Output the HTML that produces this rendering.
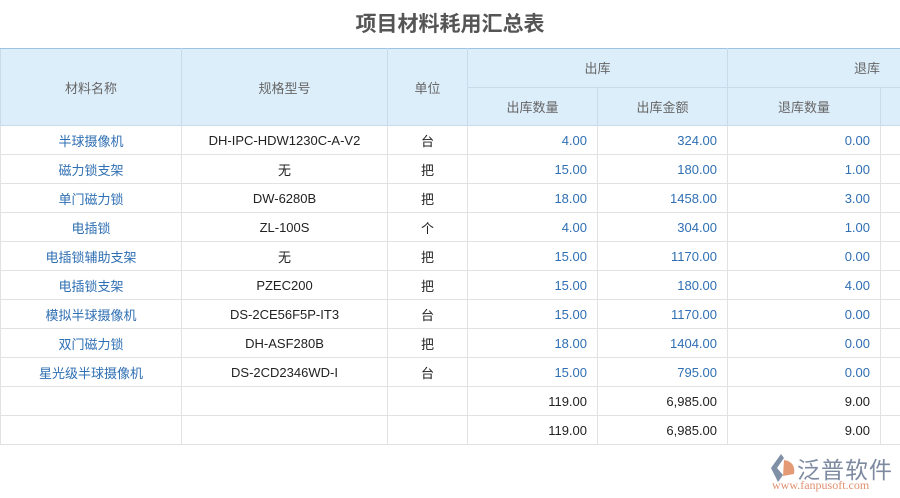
<!DOCTYPE html><html><head><meta charset="utf-8"><style>
body{margin:0;width:900px;height:498px;background:#fff;font-family:"Liberation Sans","Noto Sans CJK SC",sans-serif;overflow:hidden;position:relative}
h1{margin:0;position:absolute;top:8px;left:0;width:900px;text-align:center;font-size:21px;color:#555;font-weight:bold;letter-spacing:0px}
table{position:absolute;top:48px;left:0;border-collapse:collapse;table-layout:fixed;width:920px;font-size:13px}
td,th{border:1px solid #e2e2e2;height:28px;padding:0 10px;white-space:nowrap;overflow:hidden}
th{background:#ddeefb;color:#666;font-weight:normal;border-color:#c9dbea}
thead tr:first-child th{border-top:1px solid #9cc3e2}
.c{text-align:center}.r{text-align:right}
.b{color:#2f6fb3}
td{color:#222}
</style></head><body>
<h1>项目材料耗用汇总表</h1>
<table>
<colgroup><col style="width:181px"><col style="width:206px"><col style="width:80px"><col style="width:130px"><col style="width:130px"><col style="width:153px"><col style="width:40px"></colgroup>
<thead>
<tr><th rowspan="2" style="height:76px">材料名称</th><th rowspan="2">规格型号</th><th rowspan="2">单位</th><th colspan="2" style="height:37px">出库</th><th colspan="2" style="text-align:left;padding-left:126px">退库</th></tr>
<tr><th style="height:37px">出库数量</th><th>出库金额</th><th>退库数量</th><th></th></tr>
</thead>
<tbody>
<tr><td class="c b">半球摄像机</td><td class="c">DH-IPC-HDW1230C-A-V2</td><td class="c">台</td><td class="r b">4.00</td><td class="r b">324.00</td><td class="r b">0.00</td><td></td></tr>
<tr><td class="c b">磁力锁支架</td><td class="c">无</td><td class="c">把</td><td class="r b">15.00</td><td class="r b">180.00</td><td class="r b">1.00</td><td></td></tr>
<tr><td class="c b">单门磁力锁</td><td class="c">DW-6280B</td><td class="c">把</td><td class="r b">18.00</td><td class="r b">1458.00</td><td class="r b">3.00</td><td></td></tr>
<tr><td class="c b">电插锁</td><td class="c">ZL-100S</td><td class="c">个</td><td class="r b">4.00</td><td class="r b">304.00</td><td class="r b">1.00</td><td></td></tr>
<tr><td class="c b">电插锁辅助支架</td><td class="c">无</td><td class="c">把</td><td class="r b">15.00</td><td class="r b">1170.00</td><td class="r b">0.00</td><td></td></tr>
<tr><td class="c b">电插锁支架</td><td class="c">PZEC200</td><td class="c">把</td><td class="r b">15.00</td><td class="r b">180.00</td><td class="r b">4.00</td><td></td></tr>
<tr><td class="c b">模拟半球摄像机</td><td class="c">DS-2CE56F5P-IT3</td><td class="c">台</td><td class="r b">15.00</td><td class="r b">1170.00</td><td class="r b">0.00</td><td></td></tr>
<tr><td class="c b">双门磁力锁</td><td class="c">DH-ASF280B</td><td class="c">把</td><td class="r b">18.00</td><td class="r b">1404.00</td><td class="r b">0.00</td><td></td></tr>
<tr><td class="c b">星光级半球摄像机</td><td class="c">DS-2CD2346WD-I</td><td class="c">台</td><td class="r b">15.00</td><td class="r b">795.00</td><td class="r b">0.00</td><td></td></tr>
<tr><td></td><td></td><td></td><td class="r">119.00</td><td class="r">6,985.00</td><td class="r">9.00</td><td></td></tr>
<tr><td></td><td></td><td></td><td class="r">119.00</td><td class="r">6,985.00</td><td class="r">9.00</td><td></td></tr>
</tbody></table>
<svg style="position:absolute;left:769px;top:453px" width="28" height="30" viewBox="0 0 28 30"><path d="M12 1 L2 15 L9 29 L14 22 L8 15 L15 5Z" fill="#7f8fa6"/><path d="M15 7 Q27 9 25 21 L14 23 Z" fill="#e49a74"/></svg>
<div style="position:absolute;left:797px;top:451px;font-size:23px;color:#7d8aa0;font-family:'Noto Sans CJK SC',sans-serif;letter-spacing:1px">泛普软件</div>
<div style="position:absolute;left:772px;top:478px;font-size:12px;color:#e09070;font-family:'Liberation Serif',serif">www.fanpusoft.com</div>
</body></html>
